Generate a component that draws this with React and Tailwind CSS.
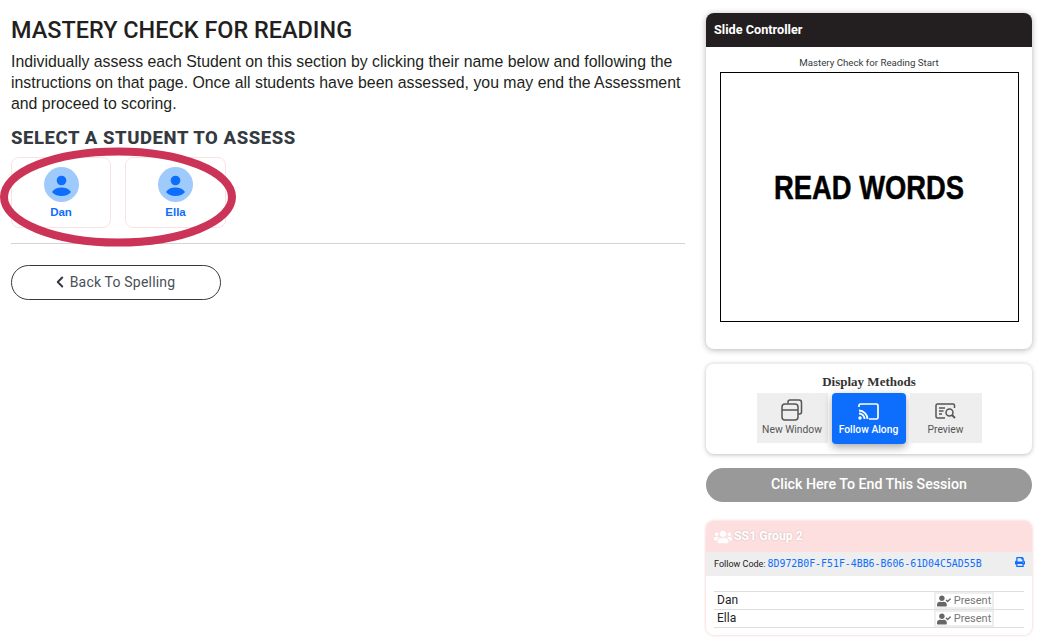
import { ChevronLeft } from "lucide-react";
import { FaUsers, FaPrint, FaUserCheck } from "react-icons/fa";

const roboto = "font-['Roboto',sans-serif]";

function StudentCard({ name, className }) {
    return (
        <div className={`h-[71px] rounded-lg border border-[#fde0e2] flex flex-col items-center pt-[9px] ${className}`}>
            <div className="w-[35px] h-[35px] rounded-full bg-[#9fcafc] flex items-center justify-center">
                <svg width="35" height="35" viewBox="0 0 35 35" fill="#0d6efd">
                    <circle cx="17.5" cy="13.5" r="4.8" />
                    <path d="M8 25c2-3.4 5.400-4.600 9.500-4.600S25 21.600 27 25c-2 2.600-5.400 4-9.500 4S10 27.600 8 25z" />
                </svg>
            </div>
            <span className="font-['Liberation_Sans',sans-serif] text-[11.5px] font-bold text-[#0d6efd] leading-[14px] mt-[3px]">{name}</span>
        </div>
    );
}

function NewWindowIcon() {
    return (
        <svg width="22" height="22" viewBox="0 0 22 22" fill="none" stroke="#555" strokeWidth="1.5">
            <path d="M7 4.500V3a2 2 0 0 1 2-2h9a2.500 2.500 0 0 1 2.500 2.500V13a2 2 0 0 1-2 2H17" />
            <rect x="1" y="5" width="16" height="16" rx="3" />
            <path d="M1 11h16" />
        </svg>
    );
}

function CastIcon() {
    return (
        <svg width="21" height="17" viewBox="0 0 21 17" fill="none" stroke="#fff" strokeWidth="1.700">
            <path d="M1 4V2.500A1.500 1.500 0 0 1 2.500 1h16A1.500 1.500 0 0 1 20 2.500v12a1.500 1.500 0 0 1-1.500 1.500H11" />
            <path d="M1 7.500c4.500 0 8.500 4 8.500 8.500" strokeWidth="1.800" />
            <path d="M1 10.500c3 0 5.500 2.500 5.500 5.500" strokeWidth="1.800" />
            <circle cx="2" cy="15" r="1.700" fill="#fff" stroke="none" />
        </svg>
    );
}

function PreviewIcon() {
    return (
        <svg width="21" height="16" viewBox="0 0 21 16" fill="none" stroke="#555" strokeWidth="1.500">
            <path d="M19.500 5V2.500A1.500 1.500 0 0 0 18 1H2.500A1.500 1.500 0 0 0 1 2.500v11A1.500 1.500 0 0 0 2.500 15H10" />
            <path d="M4 5h6M4 8h4.500M4 11h3" />
            <circle cx="14.500" cy="9.500" r="3.500" />
            <path d="M17 12l3 3" strokeWidth="1.800" />
        </svg>
    );
}

function AttendanceRow({ name }) {
    return (
        <div className="flex h-[18px] border-b border-[#dedede]">
            <span className={`${roboto} w-[220px] pl-[3px] text-xs leading-[17px] text-[#222]`}>{name}</span>
            <span className={`${roboto} w-[60px] h-[17px] border-2 border-[#eeeeee] flex items-center justify-center gap-[3px] text-[11px] leading-none text-[#777]`}>
                <FaUserCheck className="text-[#666] text-[14px]" />
                Present
            </span>
        </div>
    );
}

export default function App() {
    return (
        <div className="relative h-[637px] w-[1038px] overflow-hidden bg-white flex text-[#212529]">
            {/* Left side */}
            <div className="w-[706px] pl-[11px] pr-[21px] pt-[17px]">
                <h1 className={`${roboto} text-[23.45px] font-medium leading-[26px] text-[#231f20]`}>MASTERY CHECK FOR READING</h1>
                <p className="font-['Liberation_Sans',sans-serif] text-[15.85px] leading-[21px] mt-[8px] text-[#231f20]">
                    Individually assess each Student on this section by clicking their name below and following the instructions on that page. Once all students have been assessed, you may end the Assessment and proceed to scoring.
                </p>
                <h2 className={`${roboto} text-[18.5px] font-extrabold tracking-[0.57px] leading-[22px] mt-[13px] text-[#343a40]`}>SELECT A STUDENT TO ASSESS</h2>
                <div className="flex gap-[14px] mt-[8px]">
                    <StudentCard name="Dan" className="w-[100px]" />
                    <StudentCard name="Ella" className="w-[101px]" />
                </div>
                <div className="border-t border-[#d4d4d4] mt-[15px]" />
                <button className={`${roboto} mt-[21px] w-[210px] h-[35px] pb-[1px] pr-[2px] rounded-full border border-[#343a40] flex items-center justify-center text-sm tracking-[0.2px] text-[#495057]`}>
                    <ChevronLeft size={18} strokeWidth={2.6} className="text-[#343a40] mr-[1px] -ml-[4px]" />
                    Back To Spelling
                </button>
            </div>

            {/* Right side */}
            <div className="w-[326px] pt-[13px] flex flex-col">
                <div className="h-[336px] rounded-lg bg-white shadow-[0_1px_6px_rgba(0,0,0,0.3)] overflow-hidden">
                    <div className={`${roboto} h-[34px] bg-[#231f20] text-white text-[12.7px] font-bold leading-[34px] px-2`}>Slide Controller</div>
                    <div className={`${roboto} text-[9.7px] text-center text-[#343a40] leading-[12px] mt-[10px]`}>Mastery Check for Reading Start</div>
                    <div className="ml-[14px] mr-[13px] mt-[3px] h-[250px] border border-black flex items-center justify-center overflow-hidden">
                        <span className="font-['Liberation_Sans',sans-serif] text-[34px] font-bold text-black leading-none -mt-[21px] scale-x-[0.805] whitespace-nowrap [-webkit-text-stroke:0.5px_black]">READ WORDS</span>
                    </div>
                </div>

                <div className="h-[91px] mt-[14px] rounded-lg bg-white border-t border-[#eeeeee] shadow-[0_1px_4px_rgba(0,0,0,0.25)] flex flex-col items-center">
                    <div className="font-['Liberation_Serif',serif] text-[13px] font-bold text-[#333] leading-[13px] mt-[11px]">Display Methods</div>
                    <div className="flex gap-[4px] mt-[5px]">
                        <div className={`${roboto} w-[71px] h-[50px] bg-[#eeeeee] flex flex-col items-center text-[10.3px] text-[#555] pt-[6px] leading-[12px]`}>
                            <NewWindowIcon />
                            <span className="mt-[3px]">New Window</span>
                        </div>
                        <div className={`${roboto} w-[74px] h-[51px] rounded-sm bg-[#0d6efd] shadow-[0_3px_8px_rgba(0,0,0,0.35)] flex flex-col items-center text-[10.3px] font-medium text-white pt-[10px] leading-[12px]`}>
                            <CastIcon />
                            <span className="mt-[4px]">Follow Along</span>
                        </div>
                        <div className={`${roboto} w-[72px] h-[50px] bg-[#eeeeee] flex flex-col items-center text-[10.3px] text-[#555] pt-[10px] leading-[12px]`}>
                            <PreviewIcon />
                            <span className="mt-[5px]">Preview</span>
                        </div>
                    </div>
                </div>

                <button className={`${roboto} h-[34px] mt-[14px] rounded-full bg-[#999999] text-white text-[14.2px] font-medium`}>Click Here To End This Session</button>

                <div className="h-[114px] mt-[19px] rounded-lg bg-white shadow-[0_0_3px_rgba(240,150,150,0.6)] overflow-hidden">
                    <div className={`${roboto} h-[31px] bg-[#fddfdf] flex items-center gap-[2px] px-2 text-white text-[12.3px] font-bold [text-shadow:0_0_2px_rgba(0,0,0,0.2)]`}>
                        <FaUsers className="text-[18px]" />
                        SS1 Group 2
                    </div>
                    <div className="h-[24px] bg-[#eeeeee] flex items-center justify-between pl-2 pr-[7px]">
                        <div className="flex items-center gap-[2px] leading-none">
                            <span className={`${roboto} text-[9px] text-[#222]`}>Follow Code:</span>
                            <span className="font-['DejaVu_Sans_Mono',monospace] text-[9.9px] text-[#0d6efd]">8D972B0F-F51F-4BB6-B606-61D04C5AD55B</span>
                        </div>
                        <FaPrint className="text-[#0d6efd] text-[10px] -mt-[4px]" />
                    </div>
                    <div className="mx-2 mt-[15px] border-t border-[#dedede]">
                        <AttendanceRow name="Dan" />
                        <AttendanceRow name="Ella" />
                    </div>
                </div>
            </div>

            {/* Red circle drawn over the student cards */}
            <svg className="absolute left-0 top-[146px] pointer-events-none" width="240" height="102" viewBox="0 0 240 102" fill="none">
                <ellipse cx="118" cy="51" rx="114" ry="45.500" stroke="#cb3357" strokeWidth="8" />
            </svg>
        </div>
    );
}
